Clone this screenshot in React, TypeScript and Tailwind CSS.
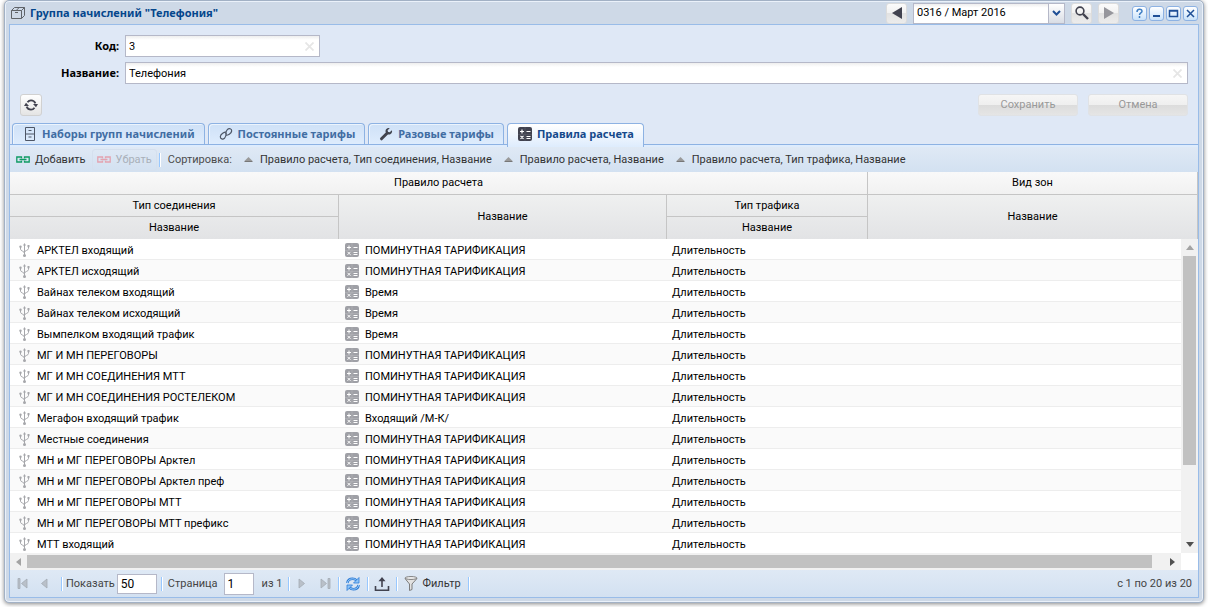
import type { ReactNode } from 'react';

type Row = { connection: string; rule: string };

const PER_MINUTE = 'ПОМИНУТНАЯ ТАРИФИКАЦИЯ';

const rows: Row[] = [
  { connection: 'АРКТЕЛ входящий', rule: PER_MINUTE },
  { connection: 'АРКТЕЛ исходящий', rule: PER_MINUTE },
  { connection: 'Вайнах телеком входящий', rule: 'Время' },
  { connection: 'Вайнах телеком исходящий', rule: 'Время' },
  { connection: 'Вымпелком входящий трафик', rule: 'Время' },
  { connection: 'МГ И МН ПЕРЕГОВОРЫ', rule: PER_MINUTE },
  { connection: 'МГ И МН СОЕДИНЕНИЯ МТТ', rule: PER_MINUTE },
  { connection: 'МГ И МН СОЕДИНЕНИЯ РОСТЕЛЕКОМ', rule: PER_MINUTE },
  { connection: 'Мегафон входящий трафик', rule: 'Входящий /М-К/' },
  { connection: 'Местные соединения', rule: PER_MINUTE },
  { connection: 'МН и МГ ПЕРЕГОВОРЫ Арктел', rule: PER_MINUTE },
  { connection: 'МН и МГ ПЕРЕГОВОРЫ Арктел преф', rule: PER_MINUTE },
  { connection: 'МН и МГ ПЕРЕГОВОРЫ МТТ', rule: PER_MINUTE },
  { connection: 'МН и МГ ПЕРЕГОВОРЫ МТТ префикс', rule: PER_MINUTE },
  { connection: 'МТТ входящий', rule: PER_MINUTE },
];

function BoxIcon() {
  return (
    <svg className="h-[14px] w-[14px]" viewBox="0 0 14 14" fill="none" stroke="#5f6368">
      <path d="M.5 4.5h10v8H.5zM.5 4.5l3-3h10l-3 3M10.5 12.5l3-3v-8M4 6.5h3M5.500 4.200l2.600-2.600" />
    </svg>
  );
}

function CabinetIcon() {
  return (
    <svg className="h-4 w-4" viewBox="0 0 16 16" fill="none" stroke="#4d5666">
      <path d="M3.500 1.500h9v13h-9zM3.500 8h9M6.500 4.500h3M6.500 11h3" />
    </svg>
  );
}

function LinkIcon() {
  return (
    <svg className="h-4 w-4" viewBox="0 0 16 16" fill="none" stroke="#4d5666" strokeWidth="1.2">
      <path d="M8.200 6.200C6.500 5.800 2.500 8 2.300 10.800c0 2.200 2.600 3 4.200 1.500C8 10.800 8.200 9 8.300 7.300" />
      <path d="M7.800 9.200c1.700.4 5.700-1.600 5.900-4.300 0-2.200-2.600-3-4.200-1.500C8 4.900 7.800 6.500 7.700 8.200" />
    </svg>
  );
}

function WrenchIcon() {
  return (
    <svg className="h-4 w-4" viewBox="0 0 16 16">
      <path d="M3.500 12.800 9.300 7" stroke="#41444f" strokeWidth="3" strokeLinecap="round" />
      <path
        d="M13.900 4.300 11.700 6.300 10 5.900 9.600 4.300 11.700 2.200C9.500 1.500 7.300 3.100 7.500 5.600 8 8.300 10.300 9 12.300 8.200 13.800 7.500 14.500 5.800 13.900 4.300z"
        fill="#41444f"
      />
    </svg>
  );
}

function CalcIcon({ muted = false }: { muted?: boolean }) {
  return (
    <svg className="h-[14px] w-[14px] shrink-0" viewBox="0 0 14 14">
      <rect width="14" height="14" rx="2" fill={muted ? '#9fa0a6' : '#41424f'} />
      <path
        d="M2 4.500h4M4 2.500v4M8.500 4.500h4M2.500 8.800l3 3M5.500 8.800l-3 3M8.500 9.500h4M8.500 11.500h4"
        stroke="#fff"
        strokeWidth={muted ? 1 : 1.2}
      />
      <path d="M7 0v14M0 7.500h14" stroke={muted ? '#b5b6bb' : '#5d5e69'} strokeWidth=".6" />
    </svg>
  );
}

function UsbIcon() {
  return (
    <svg className="h-[14px] w-[11px] shrink-0" viewBox="0 0 11 14" fill="none" stroke="#a6a7ab">
      <path d="M5.500 2v10M1.500 4v2.200c0 1.800 4 2 4 4M9.500 3.500v2c0 2-4 2-4 3.700" />
      <path d="M5.500 0 7 2.500H4z" fill="#a6a7ab" stroke="none" />
      <circle cx="1.500" cy="3.700" r="1.200" fill="#a6a7ab" stroke="none" />
      <path d="M8.500 2h2v2.200h-2z" fill="#a6a7ab" stroke="none" />
      <circle cx="5.500" cy="12.400" r="1.500" fill="#a6a7ab" stroke="none" />
    </svg>
  );
}

function ChainIcon({ color }: { color: string }) {
  return (
    <svg className="h-[7px] w-[14px]" viewBox="0 0 14 7" fill="none" stroke={color} strokeWidth="1.3">
      <path d="M5.500 2.200V1H.8v5h4.700V4.800M8.500 2.200V1h4.700v5H8.500V4.800M3.500 3.500h7" />
    </svg>
  );
}

function SortIcon() {
  return (
    <svg className="h-[5px] w-[9px]" viewBox="0 0 9 5">
      <path d="M4.500 0 8.500 4H.5z" fill="#9a9a9a" />
      <path d="M.5 4.500h8" stroke="#777" />
    </svg>
  );
}

function ReloadIcon() {
  return (
    <svg className="h-[14px] w-[14px]" viewBox="0 0 14 14" fill="none" stroke="#41424f" strokeWidth="1.8">
      <path d="M3.500 4.300C4.300 3.100 5.500 2.300 7 2.300c2 0 3.700 1.200 4.400 3M10.500 9.700C9.700 10.900 8.500 11.700 7 11.700c-2 0-3.700-1.200-4.400-3" />
      <path d="M9 6h5l-2 3.200zM5 8H0l2-3.200z" fill="#41424f" stroke="none" />
    </svg>
  );
}

function RefreshIcon() {
  return (
    <svg className="h-4 w-4" viewBox="0 0 16 16" fill="none">
      <path d="M2.300 7C2.800 4.200 5 2.800 7.600 2.800c1.700 0 3 .7 4 1.800M13.700 9c-.5 2.800-2.700 4.200-5.300 4.200-1.700 0-3-.7-4-1.800" stroke="#2e7cd6" strokeWidth="2.600" />
      <path d="M2.300 7C2.800 4.200 5 2.800 7.600 2.800c1.700 0 3 .7 4 1.800M13.700 9c-.5 2.800-2.700 4.200-5.300 4.200-1.700 0-3-.7-4-1.800" stroke="#a5d2fb" strokeWidth=".9" />
      <path d="M14 1.500v5.500H8.500zM2 14.500V9h5.500z" fill="#8cc4f8" stroke="#2e7cd6" strokeWidth=".8" />
    </svg>
  );
}

function ExportIcon() {
  return (
    <svg className="h-4 w-4" viewBox="0 0 16 16" fill="none" stroke="#41424f" strokeWidth="1.6">
      <path d="M1.500 10v4.200h13V10M8 11V3" />
      <path d="M8 1 11.500 5.200h-7z" fill="#41424f" stroke="none" />
    </svg>
  );
}

function FilterIcon() {
  return (
    <svg className="h-4 w-[14px]" viewBox="0 0 14 16" stroke="#7d7d7d">
      <path d="M1 2.500 5.500 8v6.500l2.500-1V8L13 2.500z" fill="#e2e2e2" />
      <ellipse cx="7" cy="2" rx="6" ry="1.400" fill="#f6f6f6" />
    </svg>
  );
}

function SearchIcon() {
  return (
    <svg className="h-[14px] w-[14px]" viewBox="0 0 14 14" fill="none" stroke="#41424f">
      <circle cx="5" cy="5" r="3.900" strokeWidth="1.6" />
      <path d="m8 8 5 5" strokeWidth="2.4" />
    </svg>
  );
}

function PageIcon({ back = false, bar = false }: { back?: boolean; bar?: boolean }) {
  return (
    <svg
      className={back ? 'h-[11px] w-[11px] rotate-180' : 'h-[11px] w-[11px]'}
      viewBox="0 0 11 11"
      fill="#b9c0c9"
      stroke="#a3abb4"
      strokeWidth=".8"
    >
      <path d={bar ? 'M1 1v9l5.500-4.500z' : 'M3 1v9l5.500-4.500z'} />
      {bar && <path d="M8 .5h2v10H8z" />}
    </svg>
  );
}

function ClearMark() {
  return (
    <svg className="pointer-events-none absolute top-[7px] right-[6px] h-[9px] w-[9px]" viewBox="0 0 9 9" stroke="#e6e6e6" strokeWidth="1.8">
      <path d="m.5.5 8 8M8.500.5l-8 8" />
    </svg>
  );
}

function HeaderButton({ label, children, disabled = false }: { label: string; children: ReactNode; disabled?: boolean }) {
  return (
    <button
      type="button"
      aria-label={label}
      disabled={disabled}
      className="flex h-[21px] w-[21px] items-center justify-center rounded-[3px] border border-[#dcdcdc] bg-[linear-gradient(#fbfbfb,#f1f1f1_50%,#e2e2e2_50%,#ececec)]"
    >
      {children}
    </button>
  );
}

function WindowTool({ label, children }: { label: string; children: ReactNode }) {
  return (
    <button
      type="button"
      aria-label={label}
      className="flex h-[15px] w-[15px] items-center justify-center rounded-[3px] border border-[#8db2e3] bg-linear-to-b from-white to-[#c9e2fa]"
    >
      <svg className="h-[11px] w-[11px]" viewBox="0 0 11 11" fill="none" stroke="#1f4f96" strokeWidth="1.5">
        {children}
      </svg>
    </button>
  );
}

function Tab({ icon, label, active = false }: { icon: ReactNode; label: string; active?: boolean }) {
  return (
    <button
      type="button"
      role="tab"
      aria-selected={active}
      className={
        active
          ? 'relative -mb-[3px] flex h-6 items-center gap-1 rounded-t border border-b-0 border-[#8db2e3] bg-linear-to-b from-white to-[#deecfd] px-[9px] pb-[3px] font-bold text-[#15498b]'
          : 'flex h-[21px] items-center gap-1 rounded-t border border-b-0 border-[#8db2e3] bg-linear-to-b from-[#cfe1f7] to-[#deecfd] px-[9px] font-bold text-[#416da3] shadow-[inset_1px_1px_0_#ecf4fd]'
      }
    >
      <span className="flex w-4 justify-center">{icon}</span>
      {label}
    </button>
  );
}

function SortButton({ label }: { label: string }) {
  return (
    <button type="button" className="flex items-center gap-[7px] text-[#333]">
      <SortIcon />
      {label}
    </button>
  );
}

function Separator() {
  return <span className="h-[14px] w-px shrink-0 bg-[#98c8ff] shadow-[1px_0_0_#fff]" />;
}

const field =
  'block h-[22px] w-full border border-[#b5b8c8] bg-white bg-linear-to-b from-[#eeeeee] to-white to-20% px-[3px] text-black outline-none';

const head = 'border-r border-b border-[#c5c5c5] p-0 text-center font-normal';
const headLast = 'border-r border-[#c5c5c5] p-0 text-center font-normal';
const cell = 'border-b border-[#ededed] p-0 pt-[2px]';

export default function App() {
  return (
    <div className="h-screen bg-white px-1 pb-1 font-['Roboto','Liberation_Sans',sans-serif] text-[11px] leading-[14px] text-black">
      <div className="flex h-full flex-col rounded-[5px] border border-[#a2b1c5] bg-[#ced9e7] px-1 pb-1 shadow-[0_1px_4px_#888,inset_0_0_0_1px_#eaf1fa]">
        <header className="flex h-[23px] shrink-0 items-center pt-px pr-px pl-[2px]">
          <BoxIcon />
          <h1 className="ml-[5px] flex-1 font-['Noto_Sans',sans-serif] font-bold text-[#04468c]">Группа начислений "Телефония"</h1>
          <div className="flex items-center gap-[6px]">
            <HeaderButton label="Предыдущий период">
              <svg className="h-3 w-[10px]" viewBox="0 0 10 12" fill="#41424f">
                <path d="M10 0v12L0 6z" />
              </svg>
            </HeaderButton>
            <div className="relative">
              <select
                aria-label="Период"
                defaultValue="0316"
                className="block h-[21px] w-[152px] appearance-none border border-[#b5b8c8] bg-white bg-linear-to-b from-[#eeeeee] to-white to-20% px-[3px] outline-none"
              >
                <option value="0316">0316 / Март 2016</option>
              </select>
              <span className="pointer-events-none absolute top-0 right-0 flex h-[21px] w-[17px] items-center justify-center border border-[#b5b8c8] bg-linear-to-b from-white to-[#d9dde5]">
                <svg className="h-[6px] w-[9px]" viewBox="0 0 9 6" fill="none" stroke="#1f4f96" strokeWidth="2">
                  <path d="m1 1 3.500 3.500L8 1" />
                </svg>
              </span>
            </div>
            <HeaderButton label="Поиск">
              <SearchIcon />
            </HeaderButton>
            <HeaderButton label="Следующий период" disabled>
              <svg className="h-3 w-[10px]" viewBox="0 0 10 12" fill="#96969c">
                <path d="M0 0v12l10-6z" />
              </svg>
            </HeaderButton>
          </div>
          <div className="ml-[13px] flex gap-[2px]">
            <WindowTool label="Справка">
              <path d="M3 4c0-3.500 5-3.500 5-.8C8 5 5.500 4.800 5.500 7M5.500 8v2" stroke="#3f7fc4" />
            </WindowTool>
            <WindowTool label="Свернуть">
              <path d="M2 8h7" strokeWidth="2" />
            </WindowTool>
            <WindowTool label="Развернуть">
              <path d="M1.500 2.500h8v6h-8zM1.500 3h8" />
            </WindowTool>
            <WindowTool label="Закрыть">
              <path d="m2 2 7 7M9 2 2 9" />
            </WindowTool>
          </div>
        </header>

        <main className="flex min-h-0 flex-1 flex-col border border-[#99bce8] bg-[#dfe8f6]">
          <form className="flex shrink-0 flex-col px-[10px] pt-[10px]">
            <div className="flex items-center">
              <label htmlFor="code" className="w-[105px] pr-[6px] text-right font-['Noto_Sans',sans-serif] font-bold">Код:</label>
              <div className="relative w-[195px]">
                <input id="code" className={field} defaultValue="3" />
                <ClearMark />
              </div>
            </div>
            <div className="mt-[5px] flex items-center">
              <label htmlFor="name" className="w-[105px] pr-[6px] text-right font-['Noto_Sans',sans-serif] font-bold">Название:</label>
              <div className="relative flex-1">
                <input id="name" className={field} defaultValue="Телефония" />
                <ClearMark />
              </div>
            </div>
            <div className="mt-[10px] flex items-center gap-[10px]">
              <button
                type="button"
                aria-label="Обновить"
                className="mr-auto flex h-[22px] w-[22px] items-center justify-center rounded-[3px] border border-[#d1d1d1] bg-linear-to-b from-white to-[#e4e4e4]"
              >
                <ReloadIcon />
              </button>
              {['Сохранить', 'Отмена'].map((label) => (
                <button
                  key={label}
                  type="button"
                  disabled
                  className="h-[22px] w-[100px] rounded-[3px] border border-[#e0e2e5] bg-[linear-gradient(#f6f6f6,#efefef_50%,#dcdcdc_50%,#e5e5e5)] text-[#999]"
                >
                  {label}
                </button>
              ))}
            </div>
          </form>

          <div
            role="tablist"
            className="mt-[7px] flex shrink-0 items-start gap-[3px] border-b border-[#8db2e3] px-[2px] font-['Noto_Sans',sans-serif]"
          >
            <Tab icon={<CabinetIcon />} label="Наборы групп начислений" />
            <Tab icon={<LinkIcon />} label="Постоянные тарифы" />
            <Tab icon={<WrenchIcon />} label="Разовые тарифы" />
            <Tab icon={<CalcIcon />} label="Правила расчета" active />
          </div>

          <div className="flex h-[27px] shrink-0 items-center border-t-2 border-[#deecfd] bg-linear-to-b from-[#dfe9f5] to-[#d3e1f1] px-[6px] text-[#333]">
            <button type="button" className="flex items-center gap-[5px]">
              <ChainIcon color="#0f9b63" />
              Добавить
            </button>
            <button
              type="button"
              disabled
              className="ml-[6px] flex h-[22px] items-center gap-[5px] rounded-[3px] border border-[#d5e0ee] px-1 text-[#a9b0b9]"
            >
              <ChainIcon color="#e3a3b0" />
              Убрать
            </button>
            <span className="ml-[2px] flex"><Separator /></span>
            <span className="ml-2 text-[#4c4c4c]">Сортировка:</span>
            <div className="ml-3 flex gap-3">
              <SortButton label="Правило расчета, Тип соединения, Название" />
              <SortButton label="Правило расчета, Название" />
              <SortButton label="Правило расчета, Тип трафика, Название" />
            </div>
          </div>

          <div className="relative min-h-0 flex-1 overflow-hidden bg-white">
            <table className="w-full table-fixed border-separate border-spacing-0">
              <colgroup>
                <col className="w-[329px]" />
                <col className="w-[328px]" />
                <col className="w-[201px]" />
                <col />
              </colgroup>
              <thead className="bg-[linear-gradient(#f9f9f9,#f1f1f1_34%,#eff0f0_34%,#e2e3e5)]">
                <tr className="h-[23px]">
                  <th colSpan={3} className={head}>Правило расчета</th>
                  <th className={head}>Вид зон</th>
                </tr>
                <tr className="h-[22px]">
                  <th className={head}>Тип соединения</th>
                  <th rowSpan={2} className={headLast}>Название</th>
                  <th className={head}>Тип трафика</th>
                  <th rowSpan={2} className={headLast}>Название</th>
                </tr>
                <tr className="h-[22px]">
                  <th className={headLast}>Название</th>
                  <th className={headLast}>Название</th>
                </tr>
              </thead>
              <tbody>
                {rows.map((row) => (
                  <tr key={row.connection} className="h-[21px] even:bg-[#fafafa]">
                    <td className={`${cell} pl-[9px]`}>
                      <span className="flex items-center gap-[7px]">
                        <UsbIcon />
                        <span className="pt-[2px]">{row.connection}</span>
                      </span>
                    </td>
                    <td className={`${cell} pl-[6px]`}>
                      <span className="flex items-center gap-[6px]">
                        <CalcIcon muted />
                        <span className="pt-[2px]">{row.rule}</span>
                      </span>
                    </td>
                    <td className={`${cell} pl-[5px]`}>
                      <span className="flex pt-[2px]">Длительность</span>
                    </td>
                    <td className={cell} />
                  </tr>
                ))}
              </tbody>
            </table>
            <div className="absolute top-[67px] right-0 bottom-0 flex w-[17px] flex-col items-center bg-[#f1f1f1]">
              <svg className="my-[6px] h-[5px] w-[8px] shrink-0" viewBox="0 0 8 5" fill="#a3a3a3">
                <path d="m4 0 4 5H0z" />
              </svg>
              <div className="h-2/3 w-[13px] bg-[#c1c1c1]" />
              <svg className="mt-auto mb-[6px] h-[5px] w-[8px] shrink-0" viewBox="0 0 8 5" fill="#505050">
                <path d="M0 0h8L4 5z" />
              </svg>
            </div>
          </div>

          <div className="flex h-[17px] shrink-0 bg-white pr-[17px]">
            <div className="flex flex-1 items-center bg-[#f1f1f1] px-[6px]">
              <svg className="h-[8px] w-[5px]" viewBox="0 0 5 8" fill="#a3a3a3">
                <path d="M5 0v8L0 4z" />
              </svg>
              <div className="mr-[18px] ml-[6px] h-[13px] flex-1 bg-[#c1c1c1]" />
              <svg className="h-[8px] w-[5px]" viewBox="0 0 5 8" fill="#505050">
                <path d="M0 0v8l5-4z" />
              </svg>
            </div>
          </div>

          <footer className="flex h-[27px] shrink-0 items-center bg-linear-to-b from-[#dfe9f5] to-[#d3e1f1] pr-[6px] pl-[7px] text-[#444]">
            <div className="flex items-center gap-[11px]">
              <button type="button" aria-label="Первая страница" disabled><PageIcon back bar /></button>
              <button type="button" aria-label="Назад" disabled><PageIcon back /></button>
              <Separator />
            </div>
            <label htmlFor="limit" className="mr-[2px] ml-1">Показать</label>
            <input id="limit" defaultValue="50" className="h-5 w-10 border border-[#b5b8c8] bg-white px-[3px] text-xs text-black outline-none" />
            <span className="mr-[6px] ml-1 flex"><Separator /></span>
            <label htmlFor="page" className="mr-[6px]">Страница</label>
            <input id="page" defaultValue="1" className="h-[22px] w-[30px] border border-[#b5b8c8] bg-white px-[3px] text-xs text-black outline-none" />
            <span className="mr-[6px] ml-2">из 1</span>
            <div className="flex items-center gap-[7px]">
              <Separator />
              <button type="button" aria-label="Вперед" disabled><PageIcon /></button>
              <button type="button" aria-label="Последняя страница" disabled className="ml-[6px]"><PageIcon bar /></button>
              <Separator />
              <button type="button" aria-label="Обновить список" className="-mx-px"><RefreshIcon /></button>
              <Separator />
              <button type="button" aria-label="Экспорт" className="-mx-px"><ExportIcon /></button>
              <Separator />
              <button type="button" className="flex items-center gap-1 text-[#333]">
                <FilterIcon />
                Фильтр
              </button>
              <Separator />
            </div>
            <span className="ml-auto">с 1 по 20 из 20</span>
          </footer>
        </main>
      </div>
    </div>
  );
}
